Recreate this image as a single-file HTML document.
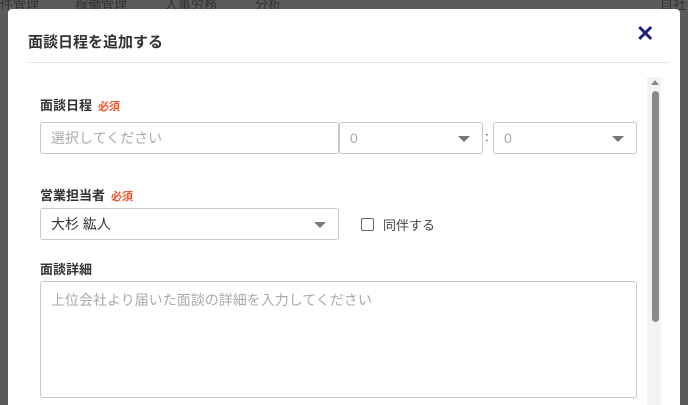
<!DOCTYPE html>
<html style="width:688px;height:405px;overflow:hidden"><head><meta charset="utf-8"><style>
*{box-sizing:border-box;margin:0;padding:0}
body{width:688px;height:405px;overflow:hidden;background:#5b5b5b;font-family:"Liberation Sans","Noto Sans CJK JP",sans-serif;position:relative}
.bgt{position:absolute;top:-6px;color:#333;font-size:13px}
.modal{position:absolute;left:8px;top:9px;width:672px;height:396px;background:#fff;border-radius:4px 4px 0 0;overflow:hidden}
.title{position:absolute;left:20px;top:22px;font-size:15px;font-weight:bold;color:#333}
.close{position:absolute;left:628px;top:12px;font-size:22px;color:#1d1f7a;font-weight:bold}
.hr{position:absolute;left:20px;top:53px;width:642px;height:1px;background:#e6e6e6}
.lbl{position:absolute;left:32px;font-size:13px;font-weight:bold;color:#333}
.lbl span{color:#f0542c;font-size:11px;margin-left:6px}
.box{position:absolute;border:1px solid #c8c8c8;border-radius:3px;background:#fff;font-size:14px;color:#aaa;padding-left:10px;display:flex;align-items:center}
.arr{position:absolute;right:12px;top:13px;width:0;height:0;border-left:6px solid transparent;border-right:6px solid transparent;border-top:6px solid #777}
.sb{position:absolute;left:639px;top:68px;width:14px;height:340px;background:#f3f3f3}
.thumb{position:absolute;left:644px;top:82px;width:7px;height:231px;background:#8a8a8a;border-radius:4px}
.up{position:absolute;left:643px;top:71px;width:0;height:0;border-left:4px solid transparent;border-right:4px solid transparent;border-bottom:5px solid #888}
</style></head><body>
<div class="bgt" style="left:0">件管理</div><div class="bgt" style="left:75px">稼働管理</div><div class="bgt" style="left:165px">人事労務</div><div class="bgt" style="left:255px">分析</div><div class="bgt" style="left:660px">自社</div>
<div class="modal">
<div class="title">面談日程を追加する</div>
<div class="close">✕</div>
<div class="hr"></div>
<div class="sb"></div><div class="up"></div><div class="thumb"></div>
<div class="lbl" style="top:86px">面談日程<span>必須</span></div>
<div class="box" style="left:32px;top:113px;width:299px;height:32px">選択してください</div>
<div class="box" style="left:331px;top:113px;width:144px;height:32px">0<div class="arr"></div></div>
<div style="position:absolute;left:477px;top:120px;font-size:13px;color:#333">:</div>
<div class="box" style="left:485px;top:113px;width:144px;height:32px">0<div class="arr"></div></div>
<div class="lbl" style="top:176px">営業担当者<span>必須</span></div>
<div class="box" style="left:32px;top:199px;width:299px;height:32px;color:#333">大杉 紘人<div class="arr"></div></div>
<div style="position:absolute;left:353px;top:209px;width:13px;height:13px;border:1.5px solid #666;border-radius:2px"></div>
<div style="position:absolute;left:375px;top:206px;font-size:13px;color:#444">同伴する</div>
<div class="lbl" style="top:250px">面談詳細</div>
<div class="box" style="left:32px;top:272px;width:597px;height:117px;align-items:flex-start;padding-top:8px">上位会社より届いた面談の詳細を入力してください</div>
</div>
</body></html>
